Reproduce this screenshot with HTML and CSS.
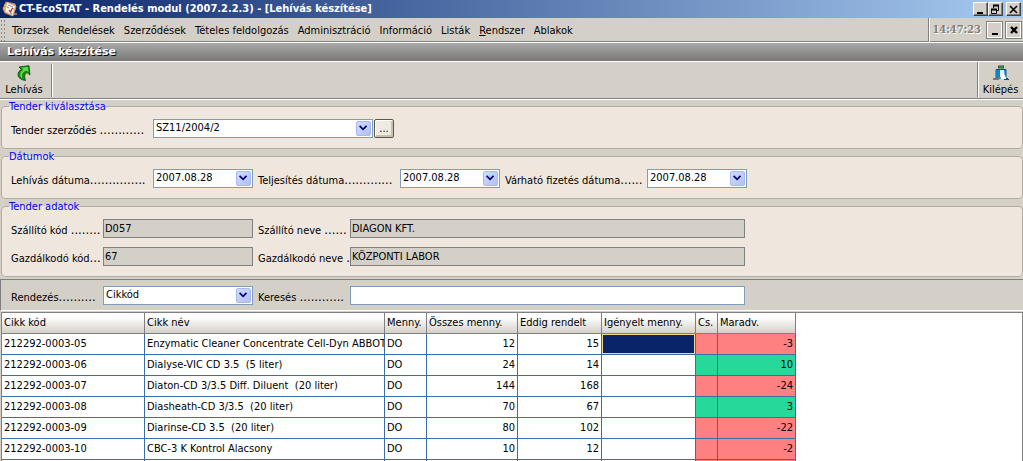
FILE: index.html
```html
<!DOCTYPE html>
<html lang="hu">
<head>
<meta charset="utf-8">
<title>CT-EcoSTAT - Rendelés modul</title>
<link rel="stylesheet" href="styles.css">
</head>
<body>
<header class="titlebar">
  <svg class="app-icon" width="16" height="16" viewBox="0 0 16 16">
    <path d="M4 1l9 2 1 3-3 9-8-3-2-4z" fill="#e9a64a" stroke="#c98a4e"/>
    <path d="M5 1.500l8.500 3.500-3 9.500-7.500-4z" fill="#f7f3ee" stroke="#c9b8a8" stroke-width=".7"/>
    <path d="M6 4l5 2M5 6l2 1M10 7l2 1M8 12l2 1" stroke="#8a93b8"/>
    <path d="M7 9l1.500 2 2-4" fill="none" stroke="#e02020" stroke-width="1.200"/>
    <path d="M2 4h2M1 7h2M12 13h3" stroke="#f4d070"/>
  </svg>
  <h1 class="app-title">CT-EcoSTAT - Rendelés modul (2007.2.2.3) - [Lehívás készítése]</h1>
  <div class="win-buttons">
    <button class="win-btn" aria-label="Kis méret"><svg width="12" height="11" viewBox="0 0 12 11"><path d="M3 9h6" stroke="#000" stroke-width="2"/></svg></button>
    <button class="win-btn" aria-label="Előző méret"><svg width="12" height="11" viewBox="0 0 12 11" fill="none" stroke="#000"><path d="M4 1.500h6M2 5.500h6" stroke-width="2"/><path d="M4.500 4V1M9.500 1v5.500H8M2.500 5v4.500h5V5"/></svg></button>
    <button class="win-btn win-close" aria-label="Bezárás"><svg width="12" height="11" viewBox="0 0 12 11"><path d="M3 2l7 7M10 2L3 9" stroke="#000" stroke-width="1.600"/></svg></button>
  </div>
</header>

<div class="menubar">
  <span class="grip"></span>
  <nav class="menu">
    <button>Törzsek</button>
    <button>Rendelések</button>
    <button>Szerződések</button>
    <button>Tételes feldolgozás</button>
    <button>Adminisztráció</button>
    <button>Információ</button>
    <button>Listák</button>
    <button><u>R</u>endszer</button>
    <button>Ablakok</button>
  </nav>
  <div class="menu-right">
    <time class="clock">14:47:23</time>
    <button class="mdi-btn" aria-label="Ablak kis méret"><svg width="12" height="12" viewBox="0 0 12 12"><path d="M3 10h6" stroke="#000" stroke-width="2"/></svg></button>
    <button class="mdi-btn" aria-label="Ablak bezárása"><svg width="12" height="12" viewBox="0 0 12 12"><path d="M3 3l6 6M9 3l-6 6" stroke="#000" stroke-width="2.400"/></svg></button>
  </div>
</div>

<h2 class="page-title">Lehívás készítése</h2>

<div class="toolbar">
  <button class="tool tool-call">
    <svg width="16" height="16" viewBox="0 0 16 16">
      <path d="M3 2L13 .7 14 10 11 7.500C8.500 9 8 11.500 9.500 15.500 5.500 15 2 13 2 9.500 2 7 3.500 5.500 5.500 4.500z" fill="#178a12" stroke="#0a4a08" stroke-width=".8"/>
      <path d="M5 2.800L12 2l.5 5L10.500 5.500C6.500 7 5 9.500 6.500 13.500 3.500 11.500 3 7.500 7.500 4.500z" fill="#5fe04a"/>
    </svg>
    <span>Lehívás</span>
  </button>
  <span class="tool-sep"></span>
  <button class="tool tool-exit">
    <svg width="16" height="16" viewBox="0 0 16 16">
      <path d="M5 .5h6v3H5z" fill="#444"/><path d="M6 1.500h4v1H6z" fill="#18d030"/>
      <path d="M3 4.500h10V13H3z" fill="#dff0fa" stroke="#07547e"/>
      <path d="M3 5h4v7l-2 2H3z" fill="#1683bd"/>
      <path d="M11 5h2v8h-1z" fill="#1683bd"/>
      <path d="M0 13h5l2-1-1 3H0z" fill="#777"/>
      <path d="M8 13l1-5 3 3 2 3h-6z" fill="#fff"/>
      <path d="M11 14.500h5M13 13.500h2" stroke="#07547e"/>
    </svg>
    <span>Kilépés</span>
  </button>
</div>

<main class="content">
  <form class="form">
    <fieldset class="group">
      <legend>Tender kiválasztása</legend>
      <div class="row">
        <label class="label label-wide" for="tender">Tender szerződés <span class="dots">............</span></label>
        <span class="combo combo-wide"><select id="tender"><option>SZ11/2004/2</option></select><svg class="arrow" width="15" height="15" viewBox="0 0 15 15"><path d="M3 4.500l4 4 4-4" fill="none" stroke="#000080" stroke-width="2"/></svg></span>
        <button type="button" class="more">...</button>
      </div>
    </fieldset>
    <fieldset class="group">
      <legend>Dátumok</legend>
      <div class="row">
        <label class="label label-wide" for="d1">Lehívás dátuma<span class="dots">...............</span></label>
        <span class="combo combo-date"><select id="d1"><option>2007.08.28</option></select><svg class="arrow" width="15" height="15" viewBox="0 0 15 15"><path d="M3 4.500l4 4 4-4" fill="none" stroke="#000080" stroke-width="2"/></svg></span>
        <label class="label label-wide label-next" for="d2">Teljesítés dátuma<span class="dots">.............</span></label>
        <span class="combo combo-date"><select id="d2"><option>2007.08.28</option></select><svg class="arrow" width="15" height="15" viewBox="0 0 15 15"><path d="M3 4.500l4 4 4-4" fill="none" stroke="#000080" stroke-width="2"/></svg></span>
        <label class="label label-wide label-next" for="d3">Várható fizetés dátuma<span class="dots">......</span></label>
        <span class="combo combo-date"><select id="d3"><option>2007.08.28</option></select><svg class="arrow" width="15" height="15" viewBox="0 0 15 15"><path d="M3 4.500l4 4 4-4" fill="none" stroke="#000080" stroke-width="2"/></svg></span>
      </div>
    </fieldset>
    <fieldset class="group">
      <legend>Tender adatok</legend>
      <div class="row">
        <label class="label" for="szk">Szállító kód <span class="dots">........</span></label>
        <input class="text readonly code" id="szk" value="D057" readonly>
        <label class="label label-next" for="szn">Szállító neve <span class="dots">......</span></label>
        <input class="text readonly name" id="szn" value="DIAGON KFT." readonly>
      </div>
      <div class="row">
        <label class="label" for="gk">Gazdálkodó kód<span class="dots">...</span></label>
        <input class="text readonly code" id="gk" value="67" readonly>
        <label class="label label-next" for="gn">Gazdálkodó neve <span class="dots">.</span></label>
        <input class="text readonly name" id="gn" value="KÖZPONTI LABOR" readonly>
      </div>
    </fieldset>
  </form>

  <div class="sortbar">
    <div class="row">
      <label class="label" for="sort">Rendezés<span class="dots">..........</span></label>
      <span class="combo code"><select id="sort"><option>Cikkód</option></select><svg class="arrow" width="15" height="15" viewBox="0 0 15 15"><path d="M3 4.500l4 4 4-4" fill="none" stroke="#000080" stroke-width="2"/></svg></span>
      <label class="label label-next" for="search">Keresés <span class="dots">............</span></label>
      <input class="text name" id="search" type="text">
    </div>
  </div>

  <div class="grid-pane">
    <table class="grid">
      <colgroup><col class="c-code"><col class="c-name"><col class="c-unit"><col class="c-all"><col class="c-done"><col class="c-req"><col class="c-cs"><col class="c-left"></colgroup>
      <thead><tr><th>Cikk kód</th><th>Cikk név</th><th>Menny.</th><th>Összes menny.</th><th>Eddig rendelt</th><th>Igényelt menny.</th><th>Cs.</th><th>Maradv.</th></tr></thead>
      <tbody>
        <tr class="over"><td>212292-0003-05</td><td>Enzymatic Cleaner Concentrate Cell-Dyn ABBOT</td><td>DO</td><td>12</td><td>15</td><td class="selected"></td><td></td><td>-3</td></tr>
        <tr class="ok"><td>212292-0003-06</td><td>Dialyse-VIC CD 3.5&nbsp; (5 liter)</td><td>DO</td><td>24</td><td>14</td><td></td><td></td><td>10</td></tr>
        <tr class="over"><td>212292-0003-07</td><td>Diaton-CD 3/3.5 Diff. Diluent&nbsp; (20 liter)</td><td>DO</td><td>144</td><td>168</td><td></td><td></td><td>-24</td></tr>
        <tr class="ok"><td>212292-0003-08</td><td>Diasheath-CD 3/3.5&nbsp; (20 liter)</td><td>DO</td><td>70</td><td>67</td><td></td><td></td><td>3</td></tr>
        <tr class="over"><td>212292-0003-09</td><td>Diarinse-CD 3.5&nbsp; (20 liter)</td><td>DO</td><td>80</td><td>102</td><td></td><td></td><td>-22</td></tr>
        <tr class="over"><td>212292-0003-10</td><td>CBC-3 K Kontrol Alacsony</td><td>DO</td><td>10</td><td>12</td><td></td><td></td><td>-2</td></tr>
        <tr class="over"><td></td><td></td><td></td><td></td><td></td><td></td><td></td><td></td></tr>
      </tbody>
    </table>
  </div>
</main>
</body>
</html>
```
FILE: styles.css
```css
* { box-sizing: border-box; }

body {
  margin: 0;
  height: 100vh;
  overflow: hidden;
  display: flex;
  flex-direction: column;
  background: #d4d0c8;
  color: #000;
  font: 11px/14px "DejaVu Sans Condensed", "DejaVu Sans", sans-serif;
}

button, input, select {
  font: inherit;
  color: inherit;
  border-radius: 0;
  margin: 0;
}

button { padding: 0; border: 0; background: none; }
svg { display: block; flex: none; }

/* Title bar */
.titlebar {
  display: flex;
  align-items: center;
  height: 18px;
  padding: 0 2px;
  background: linear-gradient(90deg, #0a246a, #a6caf0);
  flex: none;
}
.app-title { flex: 1; margin: 0 0 0 1px; color: #fff; font-size: 11px; line-height: 14px; white-space: nowrap; }
.win-buttons { display: flex; }
.win-btn {
  width: 15px;
  height: 14px;
  background: #d4d0c8;
  border: 1px solid;
  border-color: #fff #404040 #404040 #fff;
  box-shadow: inset -1px -1px #808080;
}
.win-close { margin-left: 3px; }

/* Menu */
.menubar {
  display: flex;
  height: 25px;
  flex: none;
  border-bottom: 1px solid #fff;
  box-shadow: inset 0 -1px #808080;
}
.grip {
  width: 6px;
  margin: 1px 0;
  background: radial-gradient(circle, #8c8a85 1px, transparent 1px) 0 0 / 3px 4px;
}
.menu { display: flex; flex: 1; align-items: center; gap: 9px; padding: 1px 0 0 6px; white-space: nowrap; }
.menu-right {
  display: flex;
  align-items: center;
  gap: 2px;
  padding: 0 1px 1px 3px;
  border-left: 1px solid #808080;
  box-shadow: inset 1px 0 #fff, inset 0 -1px #808080;
}
.clock {
  margin-right: 3px;
  font: bold 11px/14px "DejaVu Serif Condensed", "DejaVu Serif", serif;
  color: #808080;
  text-shadow: 1px 1px #fff;
}
.mdi-btn {
  display: grid;
  place-items: center;
  width: 17px;
  height: 18px;
  border: 1px solid #808080;
  box-shadow: inset 1px 1px #fff, inset -1px -1px #fff;
}

.page-title {
  flex: none;
  margin: 0;
  padding: 2px 7px;
  height: 19px;
  border-bottom: 1px solid #fff;
  background: linear-gradient(#a8a8a8, #787878);
  color: #fff;
  font: bold 11px/14px "DejaVu Sans", sans-serif;
  text-shadow: 1px 1px #000;
}

/* Toolbar */
.toolbar { display: flex; flex: none; height: 38px; border-bottom: 1px solid #fff; box-shadow: inset 0 -1px #808080; }
.tool { display: flex; flex-direction: column; align-items: center; gap: 2px; padding-top: 3px; }
.tool-call { width: 48px; }
.tool-sep { width: 2px; margin: 2px 3px; border-left: 1px solid #808080; border-right: 1px solid #fff; }
.tool-exit { width: 46px; margin: 0 0 2px auto; border-left: 1px solid #808080; box-shadow: inset 1px 0 #fff; }

.content { display: flex; flex-direction: column; flex: 1; min-height: 0; }
.form { display: flex; flex-direction: column; gap: 1px; padding-bottom: 2px; }

.group {
  min-width: 0;
  margin: 0 0 0 1px;
  padding: 6px 7px 10px;
  border: 1px solid #b0aca4;
  border-radius: 4px;
  background: #efe6dd;
  display: flex;
  flex-direction: column;
  gap: 9px;
}
.group legend { margin: 0; padding: 0; line-height: 13px; color: #0000f0; }
.group .row { padding-left: 2px; }

.row { display: flex; }
.label { width: 92px; flex: none; padding-top: 4px; white-space: nowrap; line-height: 14px; }
.label-wide { width: 142px; }
.label-next { margin-left: 5px; }
.dots { font-size: 13px; line-height: 13px; }

.combo { position: relative; display: flex; height: 19px; flex: none; }
.combo select {
  appearance: none;
  width: 100%;
  height: 19px;
  padding: 0 18px 1px 2px;
  border: 1px solid #7f9db9;
  background: #fff;
  outline: 0;
}
.arrow {
  position: absolute;
  top: 2px;
  right: 2px;
  border: 1px solid #a8b8f0;
  border-radius: 2px;
  background: linear-gradient(135deg, #d0dcff, #b0c0f4);
  pointer-events: none;
}
.combo-wide { width: 220px; }
.combo-date { width: 100px; }
.code { width: 150px; flex: none; }
.name { width: 395px; flex: 0 1 auto; min-width: 0; }

.more {
  width: 20px;
  height: 19px;
  margin-left: 1px;
  border: 1px solid #5c5642;
  border-radius: 2px;
  background: #efebe2;
  box-shadow: inset 1px 1px #fff, inset -2px -2px #c8c2b4;
}

.text { height: 19px; padding: 0 1px; border: 1px solid #7f9db9; background: #fff; outline: 0; }
.readonly { border-color: #808080; background: #d4d0c8; }

.sortbar {
  flex: none;
  padding: 6px 10px 5px;
  border: 1px solid #808080;
  border-right: 0;
  border-bottom-color: #fff;
}

/* Item grid */
.grid-pane {
  flex: 1;
  min-height: 0;
  overflow: hidden;
  margin: 1px 0 0 1px;
  border: 1px solid #808080;
  border-bottom: 0;
  background: #fff;
}
.grid { table-layout: fixed; width: 794px; border-collapse: separate; border-spacing: 0; }
.c-code { width: 143px; }
.c-name { width: 240px; }
.c-unit { width: 42px; }
.c-all { width: 91px; }
.c-done { width: 84px; }
.c-req { width: 94px; }
.c-cs { width: 22px; }
.c-left { width: 78px; }
.grid th, .grid td {
  height: 21px;
  padding: 0 2px;
  border-right: 1px solid #3a6ea5;
  border-bottom: 1px solid #3a6ea5;
  overflow: hidden;
  white-space: nowrap;
  text-align: left;
  font-weight: normal;
  line-height: 14px;
}
.grid th {
  border-color: #808080;
  background: linear-gradient(#fff 20%, #d4d0c8);
}
.grid td:nth-child(4), .grid td:nth-child(5), .grid td:nth-child(8) { text-align: right; }
.over td:nth-child(n+7) { background: #ff8080; }
.ok td:nth-child(n+7) { background: #26d99a; }
.grid .selected { background: #0a246a; box-shadow: inset 0 0 0 1px #f0d890; }
```
